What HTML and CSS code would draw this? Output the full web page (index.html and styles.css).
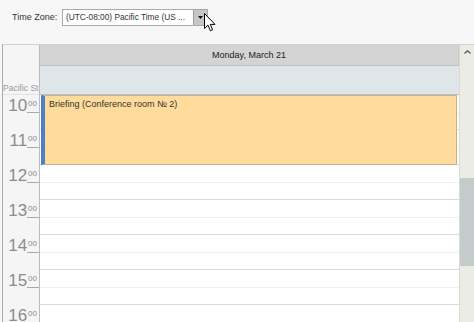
FILE: index.html
```html
<!DOCTYPE html>
<html>
	<head>
		<meta charset="UTF-8">
		<title>Scheduler - Time Zone</title>
		<link rel="stylesheet" href="styles.css">
	</head>
	<body>
		<div class="toolbar">
			<span class="tz-label">Time Zone:</span>
			<div class="combo">
				<span class="combo-text">(UTC-08:00) Pacific Time (US ...</span>
				<span class="combo-btn">
					<svg width="5" height="3" viewBox="0 0 5 3"><path d="M0 0h5L2.5 3z" fill="#111"/></svg>
				</span>
			</div>
			<svg class="cursor" width="13" height="20" viewBox="0 0 13 20">
				<path d="M0.5 0.5V15.5L4 12.2L6.4 17.8L8.6 16.8L6.3 11.4H11Z" fill="#fff" stroke="#000" stroke-width="1" stroke-linejoin="round"/>
			</svg>
		</div>

		<div class="scheduler">
			<div class="ruler">
				<div class="ruler-head"><span>Pacific St</span></div>
				<div class="ruler-hour"><span class="hh">10</span><span class="mm">00</span></div>
				<div class="ruler-hour"><span class="hh">11</span><span class="mm">00</span></div>
				<div class="ruler-hour"><span class="hh">12</span><span class="mm">00</span></div>
				<div class="ruler-hour"><span class="hh">13</span><span class="mm">00</span></div>
				<div class="ruler-hour"><span class="hh">14</span><span class="mm">00</span></div>
				<div class="ruler-hour"><span class="hh">15</span><span class="mm">00</span></div>
				<div class="ruler-hour"><span class="hh">16</span><span class="mm">00</span></div>
			</div>
			<div class="day">
				<div class="day-header">Monday, March 21</div>
				<div class="all-day"></div>
				<div class="slots">
					<div class="slot"></div><div class="slot"></div>
					<div class="slot"></div><div class="slot"></div>
					<div class="slot"></div><div class="slot"></div>
					<div class="slot"></div><div class="slot"></div>
					<div class="slot"></div><div class="slot"></div>
					<div class="slot"></div><div class="slot"></div>
					<div class="slot"></div><div class="slot"></div>
					<div class="appt">Briefing (Conference room № 2)</div>
				</div>
			</div>
			<div class="vscroll">
				<div class="vs-up">
					<svg width="7" height="4" viewBox="0 0 7 4"><path d="M0.5 3.5L3.5 0.8L6.5 3.5" fill="none" stroke="#555" stroke-width="1.2"/></svg>
				</div>
				<div class="vs-thumb"></div>
			</div>
		</div>
	</body>
</html>
```

FILE: styles.css
```css
*{
	margin: 0;
	padding: 0;
}
body{
	width: 474px;
	height: 322px;
	overflow: hidden;
	font-family: "Liberation Sans", Arial, sans-serif;
	font-size: 9px;
	color: #333;
	background: #f7f7f7;
}

/* top bar with time zone combo */
.toolbar{
	position: relative;
	display: flex;
	align-items: flex-start;
	height: 44px;
	box-sizing: border-box;
	padding: 9px 0 0 12px;
}
.tz-label{
	width: 50px;
	line-height: 17px;
}
.combo{
	display: flex;
	width: 146px;
	height: 17px;
	box-sizing: border-box;
	border: 1px solid #a9a9a9;
	background: #fff;
}
.combo-text{
	flex: 1;
	padding-left: 3px;
	font-size: 8.3px;
	line-height: 15px;
	white-space: nowrap;
}
.combo-btn{
	flex: none;
	display: flex;
	align-items: center;
	justify-content: center;
	width: 13px;
	background: #c6c6c6;
	border-left: 1px solid #a0a0a0;
}
.cursor{
	position: absolute;
	left: 204px;
	top: 13px;
}

/* scheduler */
.scheduler{
	display: flex;
	height: 278px;
	margin-left: 2px;
	border-top: 1px solid #d2d2d2;
	border-left: 1px solid #a9a9a9;
	background: #fff;
	overflow: hidden;
}
.ruler{
	flex: none;
	width: 37px;
	box-sizing: border-box;
	border-right: 1px solid #bcbcbc;
	background: #f5f5f5;
}
.ruler-head{
	display: flex;
	align-items: flex-end;
	height: 50px;
	box-sizing: border-box;
	border-bottom: 1px solid #e3e3e3;
	color: #9a9a9a;
	font-size: 8.5px;
	line-height: 11px;
	white-space: nowrap;
	overflow: hidden;
}
.ruler-hour{
	display: flex;
	align-items: flex-start;
	justify-content: flex-end;
	height: 35px;
}
.ruler-hour .hh{
	padding-top: 2px;
	font-size: 17px;
	line-height: 18px;
	color: #8c8c8c;
}
.ruler-hour .mm{
	height: 18px;
	box-sizing: border-box;
	padding: 5px 2px 0 1px;
	border-bottom: 1px solid #a8a8a8;
	font-size: 8px;
	line-height: 8px;
	color: #8c8c8c;
}

.day{
	flex: none;
	display: flex;
	flex-direction: column;
	width: 419px;
}
.day-header{
	flex: none;
	height: 21px;
	box-sizing: border-box;
	border-bottom: 1px solid #bfbfbf;
	border-right: 1px solid #c8c8c8;
	background: #d4d4d4;
	text-align: center;
	line-height: 20px;
	color: #222;
}
.all-day{
	flex: none;
	height: 29px;
	box-sizing: border-box;
	border-bottom: 1px solid #b8c2c6;
	background: #dfe6e9;
}
.slots{
	position: relative;
	flex: none;
}
.slot{
	height: 18px;
	box-sizing: border-box;
	border-bottom: 1px solid #f1f1f1;
}
.slot:nth-child(even){
	height: 17px;
	border-bottom-color: #dcdcdc;
}
.appt{
	position: absolute;
	top: 0;
	left: 1px;
	right: 2px;
	height: 70px;
	box-sizing: border-box;
	padding: 3px 0 0 4px;
	border: 1px solid #c8b189;
	border-left: 4px solid #4d7ec8;
	background: #ffdc9b;
	line-height: 11px;
	color: #333;
}

.vscroll{
	flex: 1;
	display: flex;
	flex-direction: column;
	background: #ebece3;
	border-left: 1px solid #dadbd2;
}
.vs-up{
	flex: none;
	display: flex;
	justify-content: center;
	padding-top: 5px;
	height: 17px;
	box-sizing: border-box;
}
.vs-thumb{
	flex: none;
	height: 88px;
	margin-top: 116px;
	background: #c3cbcb;
}
```
